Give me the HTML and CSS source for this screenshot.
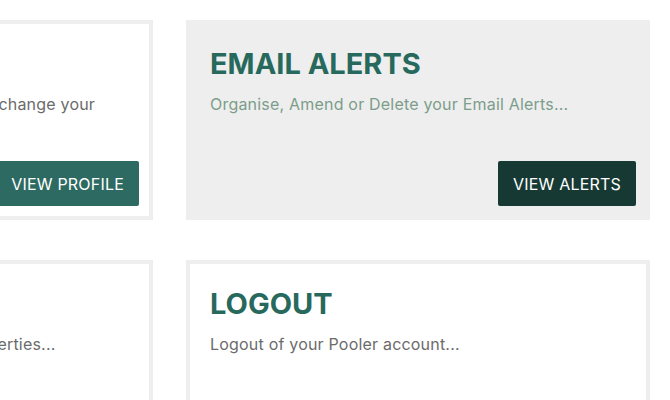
FILE: index.html
```html
<!DOCTYPE html>
<html lang="en">
  <head>
    <meta charset="UTF-8" />
    <meta name="viewport" content="width=device-width, initial-scale=1.0" />
    <title>My Account</title>
    <link rel="stylesheet" href="styles.css">
  </head>
  <body>
    <div class="account">
      <div class="card">
        <h2>MY PROFILE</h2>
        <p>Update your own personal details or change your password...</p>
        <a class="btn" href="#">VIEW PROFILE</a>
      </div>

      <div class="card active">
        <h2>EMAIL ALERTS</h2>
        <p>Organise, Amend or Delete your Email Alerts...</p>
        <a class="btn" href="#">VIEW ALERTS</a>
      </div>

      <div class="card">
        <h2>SAVED PROPERTIES</h2>
        <p>View your full shortlist of saved properties...</p>
      </div>

      <div class="card">
        <h2>LOGOUT</h2>
        <p>Logout of your Pooler account...</p>
      </div>
    </div>
  </body>
</html>
```

FILE: styles.css
```css
body {
  margin: 0;
  padding: 0;
  background: #fff;
  font-family: "Inter", "DejaVu Sans", sans-serif;
  overflow: hidden;
}
.account {
  display: grid;
  grid-template-columns: 464px 464px;
  column-gap: 33px;
  row-gap: 40px;
  margin-left: -311px;
  padding-top: 20px;
}
.card {
  box-sizing: border-box;
  height: 200px;
  border: 4px solid #eee;
  padding: 20px 10px 10px 20px;
  display: flex;
  flex-direction: column;
  background: #fff;
}
.card h2 {
  margin: 2px 0 0;
  font-size: 29px;
  font-weight: 700;
  line-height: 36px;
  color: #27695c;
}
.card p {
  margin: 12px 0 0;
  font-size: 16px;
  line-height: 20px;
  letter-spacing: 0.2px;
  color: #6b6b6b;
  max-width: 410px;
}
.card.active {
  background: #eee;
}
.card.active p {
  color: #7c9d8b;
}
.btn {
  margin-top: auto;
  margin-left: auto;
  height: 45px;
  box-sizing: border-box;
  padding: 0 15px;
  display: flex;
  align-items: center;
  border-radius: 2px;
  background: #2d6a61;
  color: #fff;
  font-size: 16px;
  letter-spacing: 0.2px;
  text-decoration: none;
}
.card.active .btn {
  background: #163a33;
}
```
